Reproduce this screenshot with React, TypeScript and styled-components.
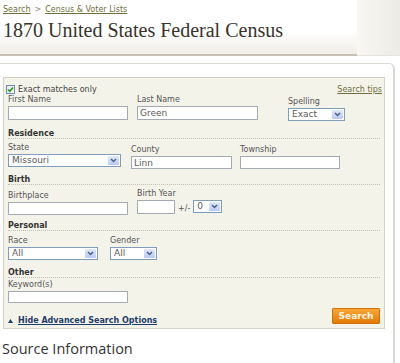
import React from 'react';
import styled, { createGlobalStyle } from 'styled-components';

const Global = createGlobalStyle`
  html, body { margin: 0; padding: 0; background: #fff; }
  body {
    font-family: "DejaVu Sans", Verdana, sans-serif;
    width: 400px;
    height: 363px;
    overflow: hidden;
  }
`;

const Page = styled.div`
  width: 400px;
`;

const Header = styled.header`
  display: flex;
  height: 56px;
`;

const HeaderMain = styled.div`
  width: 357px;
  box-sizing: border-box;
  padding: 5px 0 0 3px;
  background: linear-gradient(to bottom, #ffffff 0%, #ffffff 55%, #f0eee8 100%);
  border-bottom: 2px solid #c6c1b3;
`;

const HeaderSide = styled.div`
  flex: 1;
  background: linear-gradient(to right, #f8f7f3, #ecebe5);
  border-bottom: 1px solid #e6e3da;
`;

const Crumbs = styled.nav`
  font-size: 8px;
  line-height: 10px;
  color: #8a8a80;
  display: flex;
  gap: 4px;
`;

const Crumb = styled.a`
  color: #6e6e3c;
  text-decoration: underline;
`;

const Title = styled.h1`
  margin: 3px 0 0 0;
  font-family: "Liberation Serif", "Times New Roman", serif;
  font-weight: normal;
  font-size: 20px;
  line-height: 24px;
  color: #38342c;
  white-space: nowrap;
`;

const Panel = styled.section`
  margin-top: 7px;
  width: 395px;
  box-sizing: border-box;
  border-top: 1px solid #dcdad3;
  border-right: 2px solid #dad8d2;
  border-top-right-radius: 6px;
  padding: 13px 8px 0 3px;
  height: 300px;
`;

const FormBox = styled.form`
  background: #f4f3ea;
  border: 1px solid #d3d0c4;
  padding: 6px 4px 4px 4px;
`;

const TopRow = styled.div`
  display: flex;
  justify-content: space-between;
  align-items: center;
  height: 11px;
  font-size: 8px;
  line-height: 11px;
`;

const CheckLabel = styled.label`
  display: flex;
  align-items: center;
  gap: 3px;
  margin-left: -2px;
  color: #444;
`;

const CheckBox = styled.span`
  width: 9px;
  height: 9px;
  box-sizing: border-box;
  border: 1px solid #6d8bb0;
  background: linear-gradient(135deg, #e6e6e0, #ffffff);
  display: flex;
  align-items: center;
  justify-content: center;
`;

const TipsLink = styled.a`
  color: #6e6e3c;
  text-decoration: underline;
  margin-right: -2px;
`;

const Row = styled.div<{ $mt?: number }>`
  display: flex;
  align-items: flex-start;
  margin-top: ${p => p.$mt ?? 0}px;
`;

const Field = styled.div<{ $w: number; $ml?: number; $dy?: number }>`
  display: flex;
  flex-direction: column;
  width: ${p => p.$w}px;
  margin-left: ${p => p.$ml ?? 0}px;
  margin-top: ${p => p.$dy ?? 0}px;
`;

const Label = styled.span`
  font-size: 8px;
  line-height: 9px;
  color: #555;
  margin-bottom: 2px;
  white-space: nowrap;
`;

const TextInput = styled.input<{ $h?: number; $w?: number }>`
  box-sizing: border-box;
  width: ${p => (p.$w ? `${p.$w}px` : '100%')};
  height: ${p => p.$h ?? 13}px;
  border: 1px solid #a3aab4;
  background: #fff;
  padding: 0 2px;
  margin: 0;
  font-family: "DejaVu Sans", Verdana, sans-serif;
  font-size: 9px;
  color: #5a5a5a;
  outline: none;
`;

const SelectBox = styled.div<{ $w?: number; $h?: number }>`
  position: relative;
  box-sizing: border-box;
  width: ${p => (p.$w ? `${p.$w}px` : '100%')};
  height: ${p => p.$h ?? 13}px;
  border: 1px solid #7f9db9;
  background: #fff;
  display: flex;
  align-items: center;
  padding: 0 13px 0 3px;
  cursor: default;
`;

const SelectValue = styled.span`
  font-size: 9px;
  line-height: 11px;
  color: #5a5a5a;
  white-space: nowrap;
  overflow: hidden;
`;

const ArrowBtn = styled.span`
  position: absolute;
  top: 1px;
  right: 1px;
  bottom: 1px;
  width: 11px;
  background: linear-gradient(to bottom, #dfe8fb, #b7cbf4);
  border-radius: 1px;
  display: flex;
  align-items: center;
  justify-content: center;
`;

const SectionTitle = styled.div<{ $mt: number }>`
  margin-top: ${p => p.$mt}px;
  font-size: 8px;
  line-height: 9px;
  font-weight: bold;
  color: #333;
  border-bottom: 1px dotted #c2bfb2;
`;

const Plus = styled.span`
  font-size: 8px;
  line-height: 9px;
  color: #555;
  margin: 0 3px 1px 3px;
  align-self: flex-end;
`;

const Inline = styled.div`
  display: flex;
  align-items: flex-start;
`;

const BottomRow = styled.div`
  display: flex;
  justify-content: space-between;
  align-items: flex-end;
  margin-top: 5px;
`;

const HideLink = styled.a`
  display: flex;
  align-items: center;
  gap: 5px;
  font-size: 8px;
  line-height: 9px;
  font-weight: bold;
  color: #1f3d6b;
  text-decoration: underline;
  margin-bottom: -1px;
`;

const SearchButton = styled.button`
  width: 48px;
  height: 16px;
  padding: 0;
  margin: 0;
  border: 1px solid #cf6f08;
  border-radius: 1px;
  background: linear-gradient(to bottom, #f9a737, #e37905);
  color: #fff7e6;
  font-family: "DejaVu Sans", Verdana, sans-serif;
  font-weight: bold;
  font-size: 9px;
  line-height: 14px;
`;

const SourceTitle = styled.h2`
  margin: 11px 0 0 -1px;
  font-family: "Open Sans", "DejaVu Sans", sans-serif;
  font-weight: normal;
  font-size: 14.5px;
  line-height: 18px;
  color: #333;
`;

const Chevron = () => (
  <svg width="7" height="5" viewBox="0 0 7 5">
    <path d="M1 1 L3.5 3.5 L6 1" fill="none" stroke="#4a5f86" strokeWidth="1.5" />
  </svg>
);

const Select: React.FC<{ value: string; w?: number; h?: number }> = ({ value, w, h }) => (
  <SelectBox $w={w} $h={h} role="combobox" aria-label={value}>
    <SelectValue>{value}</SelectValue>
    <ArrowBtn>
      <Chevron />
    </ArrowBtn>
  </SelectBox>
);

export default function App() {
  return (
    <Page>
      <Global />
      <Header>
        <HeaderMain>
          <Crumbs>
            <Crumb>Search</Crumb>
            <span>&gt;</span>
            <Crumb>Census &amp; Voter Lists</Crumb>
          </Crumbs>
          <Title>1870 United States Federal Census</Title>
        </HeaderMain>
        <HeaderSide />
      </Header>

      <Panel>
        <FormBox onSubmit={e => e.preventDefault()}>
          <TopRow>
            <CheckLabel>
              <CheckBox>
                <svg width="7" height="7" viewBox="0 0 7 7">
                  <path d="M1 3.5 L2.8 5.3 L6 1.5" fill="none" stroke="#1f9a1f" strokeWidth="1.6" />
                </svg>
              </CheckBox>
              Exact matches only
            </CheckLabel>
            <TipsLink>Search tips</TipsLink>
          </TopRow>

          <Row>
            <Field $w={120}>
              <Label>First Name</Label>
              <TextInput $h={14} />
            </Field>
            <Field $w={121} $ml={9}>
              <Label>Last Name</Label>
              <TextInput $h={14} defaultValue="Green" />
            </Field>
            <Field $w={57} $ml={30} $dy={2}>
              <Label>Spelling</Label>
              <Select value="Exact" />
            </Field>
          </Row>

          <SectionTitle $mt={8}>Residence</SectionTitle>
          <Row $mt={4}>
            <Field $w={113}>
              <Label>State</Label>
              <Select value="Missouri" />
            </Field>
            <Field $w={101} $ml={10} $dy={2}>
              <Label>County</Label>
              <TextInput defaultValue="Linn" />
            </Field>
            <Field $w={100} $ml={8} $dy={2}>
              <Label>Township</Label>
              <TextInput />
            </Field>
          </Row>

          <SectionTitle $mt={6}>Birth</SectionTitle>
          <Row $mt={4}>
            <Field $w={120} $dy={2}>
              <Label>Birthplace</Label>
              <TextInput />
            </Field>
            <Field $w={90} $ml={9}>
              <Label>Birth Year</Label>
              <Inline>
                <TextInput $w={38} $h={14} />
                <Plus>+/-</Plus>
                <Select value="0" w={29} />
              </Inline>
            </Field>
          </Row>

          <SectionTitle $mt={6}>Personal</SectionTitle>
          <Row $mt={5}>
            <Field $w={90}>
              <Label>Race</Label>
              <Select value="All" />
            </Field>
            <Field $w={47} $ml={12}>
              <Label>Gender</Label>
              <Select value="All" />
            </Field>
          </Row>

          <SectionTitle $mt={8}>Other</SectionTitle>
          <Row $mt={2}>
            <Field $w={120}>
              <Label>Keyword(s)</Label>
              <TextInput $h={12} />
            </Field>
          </Row>

          <BottomRow>
            <HideLink>
              <svg width="5" height="4" viewBox="0 0 5 4">
                <path d="M0 4 L2.5 0 L5 4 Z" fill="#1f3d6b" />
              </svg>
              Hide Advanced Search Options
            </HideLink>
            <SearchButton type="submit">Search</SearchButton>
          </BottomRow>
        </FormBox>
        <SourceTitle>Source Information</SourceTitle>
      </Panel>
    </Page>
  );
}
